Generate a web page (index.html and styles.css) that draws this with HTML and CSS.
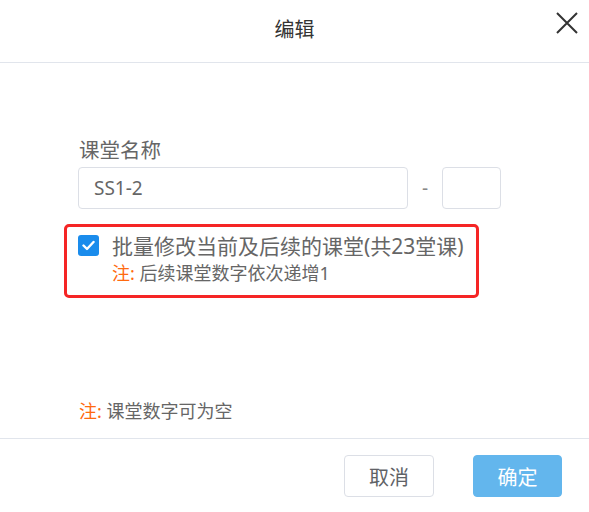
FILE: index.html
```html
<!DOCTYPE html>
<html lang="zh-CN">
<head>
<meta charset="utf-8">
<title>编辑</title>
<link rel="stylesheet" href="styles.css">
</head>
<body>
<div class="dialog">
  <header class="dlg-header">
    <span class="dlg-title">编辑</span>
    <button class="dlg-close" aria-label="关闭">
      <svg width="22" height="22" viewBox="0 0 22 22"><path d="M1 1 L21 21 M21 1 L1 21" stroke="#333" stroke-width="2" fill="none"/></svg>
    </button>
  </header>
  <main class="dlg-body">
    <div class="field-label">课堂名称</div>
    <div class="field-row">
      <div class="input main-input">SS1-2</div>
      <span class="dash">-</span>
      <div class="input num-input"></div>
    </div>
    <div class="batch-box">
      <span class="checkbox">
        <svg width="13" height="11" viewBox="0 0 13 11"><path d="M1.5 5.5 L5 9 L11.5 2" stroke="#fff" stroke-width="2.4" fill="none" stroke-linecap="round" stroke-linejoin="round"/></svg>
      </span>
      <div class="batch-text">
        <div class="batch-main">批量修改当前及后续的课堂(共23堂课)</div>
        <div class="batch-sub"><span class="warn">注:</span> 后续课堂数字依次递增1</div>
      </div>
    </div>
    <div class="note"><span class="warn">注:</span> 课堂数字可为空</div>
  </main>
  <footer class="dlg-footer">
    <button class="btn btn-cancel">取消</button>
    <button class="btn btn-ok">确定</button>
  </footer>
</div>
</body>
</html>
```
FILE: styles.css
```css
* { box-sizing: border-box; }
html, body { margin: 0; padding: 0; background: #fff; }
body {
  font-family: "Noto Sans", "Noto Sans CJK SC", sans-serif;
  color: #606266;
}
.dialog { width: 589px; height: 512px; display: flex; flex-direction: column; }
.dlg-header {
  height: 63px;
  border-bottom: 1px solid #e1e5ec;
  display: flex; align-items: center; justify-content: center;
  position: relative;
}
.dlg-title { font-size: 20px; line-height: 24px; color: #333; margin-top: -3px; }
.dlg-close {
  position: absolute; right: 11px; top: 12px;
  border: 0; background: none; padding: 0; width: 22px; height: 22px; cursor: pointer;
}
.dlg-close svg { display: block; }
.dlg-body {
  height: 375px;
  padding: 75px 0 16px 64px;
  display: flex; flex-direction: column;
}
.field-label { font-size: 20.5px; line-height: 24px; color: #666; padding-left: 15px; }
.field-row { display: flex; align-items: center; margin-top: 5px; padding-left: 14px; }
.input {
  height: 42px; border: 1px solid #dcdfe6; border-radius: 4px; background: #fff;
  font-size: 19px; line-height: 40px; color: #666;
}
.main-input { width: 330px; padding-left: 15px; }
.dash { width: 34px; text-align: center; font-size: 19px; color: #888; }
.num-input { width: 59px; }
.batch-box {
  margin-top: 15px;
  width: 415px; height: 74px;
  border: 3px solid #f52525; border-radius: 5px;
  display: flex; align-items: flex-start;
  padding: 8px 0 0 11px;
}
.checkbox {
  width: 21px; height: 21px; border-radius: 3px; background: #1a8cec;
  display: flex; align-items: center; justify-content: center; flex: none;
}
.batch-text { margin-left: 13px; margin-top: -2px; }
.batch-main { font-size: 21px; line-height: 26px; color: #666; white-space: nowrap; }
.batch-sub { font-size: 18px; line-height: 24px; color: #666; margin-top: 2px; }
.warn { color: #ff6a0f; }
.note { margin-top: auto; padding-left: 15px; font-size: 18px; line-height: 22px; color: #666; }
.dlg-footer {
  flex: 1; border-top: 1px solid #e1e5ec;
  display: flex; justify-content: flex-end; align-items: flex-start;
  padding: 16px 27px 0 0; gap: 39px;
}
.btn {
  height: 42px; border-radius: 4px; font-family: inherit; font-size: 20px;
  padding: 0; cursor: pointer;
}
.btn-cancel { width: 90px; background: #fff; border: 1px solid #dcdfe6; color: #606266; }
.btn-ok { width: 89px; background: #63b6ed; border: 1px solid #63b6ed; color: #fff; }
```
